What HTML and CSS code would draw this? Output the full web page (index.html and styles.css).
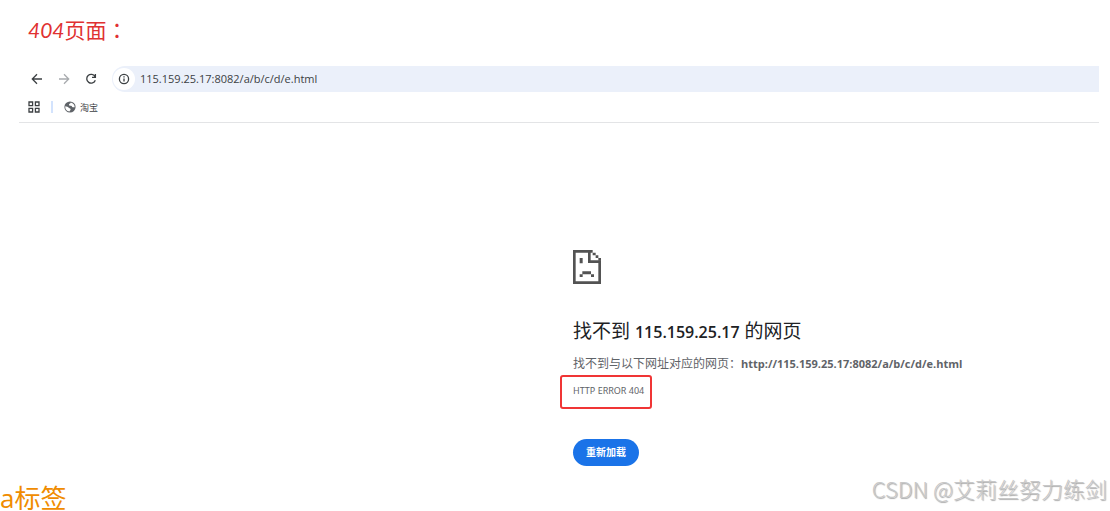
FILE: index.html
```html
<!DOCTYPE html>
<html lang="zh-CN">
<head>
    <meta charset="UTF-8">
    <meta name="viewport" content="width=device-width, initial-scale=1.0">
    <title>404页面</title>
    <link rel="stylesheet" href="styles.css">
</head>
<body>
    <h2 class="note-title" lang="zh-Hant"><i>404</i>页面：</h2>

    <div class="browser">
        <!-- Toolbar -->
        <div class="toolbar">
            <button class="nav-btn" aria-label="后退">
                <svg viewBox="0 0 12 12"><path d="M11 6H1.5M6 1.3L1.3 6L6 10.7"/></svg>
            </button>
            <button class="nav-btn disabled" aria-label="前进" disabled>
                <svg viewBox="0 0 12 12"><path d="M1 6H10.5M6 1.3L10.7 6L6 10.7"/></svg>
            </button>
            <button class="nav-btn" aria-label="刷新">
                <svg viewBox="0 0 12 12"><path d="M10 3.6A4.4 4.4 0 1 0 10.3 7.2M10.4 1V4.4H7"/></svg>
            </button>
            <div class="address-bar">
                <span class="site-info">
                    <svg viewBox="0 0 12 12"><circle cx="6" cy="6" r="4.6"/><path d="M6 5.4V8.6M6 3.3V4.5"/></svg>
                </span>
                <input class="address" type="text" aria-label="地址" value="115.159.25.17:8082/a/b/c/d/e.html">
            </div>
        </div>

        <!-- Bookmarks -->
        <div class="bookmarks">
            <button class="apps-btn" aria-label="应用">
                <svg viewBox="0 0 12 12"><path d="M1 1h3.6v3.6H1zM7.4 1H11v3.6H7.4zM1 7.4h3.6V11H1zM7.4 7.4H11V11H7.4z"/></svg>
            </button>
            <span class="divider"></span>
            <a class="bookmark" href="#">
                <svg viewBox="0 0 12 12">
                    <circle cx="6" cy="6" r="5.6" fill="#5f6368"/>
                    <path d="M6.8 1.4C6.6 2.6 5.2 2.3 5 3.4C4.8 4.3 5.8 4.8 7 4.7C8.2 4.7 7.7 6.2 8.8 6.3L10.7 6.2C10.8 4 9.2 1.9 6.8 1.4ZM1.3 5.3C1 7.9 2.7 10.3 5.6 10.6C5.4 9.4 6.8 9.3 6.6 8.2C6.3 7.1 4.9 7.5 4.5 6.6C4.1 5.8 2.6 5.4 1.3 5.3Z" fill="#fff"/>
                </svg>
                <span>淘宝</span>
            </a>
        </div>

        <!-- Error page -->
        <div class="error-page">
            <svg class="error-icon" viewBox="0 0 84 102">
                <path d="M0 0H59V8H53V31H84V102H0ZM8 8V94H76V39H45V8Z" fill-rule="evenodd"/>
                <path d="M59 8H68V16H59ZM68 16H76V24H68ZM76 24H84V32H76ZM20 24H29V40H20ZM28 64H54V73H28ZM20 73H29V81H20ZM54 73H63V81H54Z"/>
            </svg>
            <h1>找不到 <b>115.159.25.17</b> 的网页</h1>
            <p class="message">找不到与以下网址对应的网页：<strong>http://115.159.25.17:8082/a/b/c/d/e.html</strong></p>
            <div class="error-code">HTTP ERROR 404</div>
            <button class="reload-btn">重新加载</button>
        </div>
    </div>

    <h2 class="next-title">a标签</h2>
    <div class="watermark">CSDN @艾莉丝努力练剑</div>
</body>
</html>
```

FILE: styles.css
```css
/* Global Styles */
* {
    box-sizing: border-box;
}

body {
    font-family: "Open Sans", "Noto Sans CJK SC", sans-serif;
    background: #fff;
    margin: 0;
    min-height: 100vh;
    display: flex;
    flex-direction: column;
    position: relative;
}

h1, h2, p {
    margin: 0;
    font-weight: normal;
}

button {
    font-family: inherit;
    border: none;
    padding: 0;
    background: none;
    cursor: pointer;
}

svg {
    display: block;
    width: 12px;
    height: 12px;
}

.note-title {
    margin: 14px 28px 21px;
    font-family: "Noto Sans CJK TC", sans-serif;
    font-size: 21px;
    line-height: 30px;
    color: #e03131;
}

.note-title i {
    font-family: Lato, sans-serif;
}

.browser {
    margin: 0 11px 0 19px;
}

/* Toolbar */
.toolbar {
    display: flex;
    align-items: center;
    gap: 15px;
    padding-left: 12px;
}

.nav-btn svg,
.site-info svg,
.apps-btn svg {
    fill: none;
    stroke: #3c4043;
    stroke-width: 1.3;
}

.nav-btn.disabled svg {
    stroke: #a8abae;
}

.address-bar {
    flex: 1;
    display: flex;
    align-items: center;
    gap: 5px;
    height: 26px;
    padding-left: 1px;
    border-radius: 13px 0 0 13px;
    background: #ebf0fa;
}

.site-info {
    display: flex;
    align-items: center;
    justify-content: center;
    width: 22px;
    height: 22px;
    border-radius: 50%;
    background: #fff;
}

.address {
    flex: 1;
    border: none;
    outline: none;
    padding: 0 0 2px;
    background: none;
    font-family: inherit;
    font-size: 11px;
    color: #3c4043;
}

/* Bookmarks */
.bookmarks {
    display: flex;
    align-items: center;
    gap: 11px;
    height: 31px;
    padding-left: 9px;
    border-bottom: 1px solid #e3e4e6;
}

.divider {
    width: 2px;
    height: 12px;
    background: #d3e3fd;
}

.bookmark {
    display: flex;
    align-items: center;
    gap: 4px;
    font-size: 9px;
    color: #3c4043;
    text-decoration: none;
}

/* Error page */
.error-page {
    display: flex;
    flex-direction: column;
    align-items: flex-start;
    margin-left: 50%;
    padding: 127px 0 0 14px;
    color: #5f6368;
}

.error-icon {
    width: 28px;
    height: 34px;
    fill: #535353;
}

h1 {
    margin-top: 32px;
    font-size: 19px;
    line-height: 30px;
    color: #202124;
}

h1 b {
    font-size: 16px;
    font-weight: 600;
}

.message {
    margin-top: 7px;
    font-size: 12px;
    line-height: 20px;
}

.message strong {
    font-size: 11px;
}

.error-code {
    margin: 1px 0 0 -13px;
    padding: 5px 6px 7px 11px;
    border: 2px solid #f03535;
    border-radius: 3px;
    font-family: "Noto Sans", sans-serif;
    font-size: 9px;
    line-height: 18px;
}

.reload-btn {
    margin-top: 30px;
    padding: 0 13px;
    border-radius: 14px;
    background: #1a73e8;
    color: #fff;
    font-size: 10px;
    font-weight: bold;
    line-height: 27px;
}

.next-title {
    margin-top: 19px;
    font-size: 26px;
    line-height: 26px;
    color: #f08c00;
}

.watermark {
    position: absolute;
    right: 3px;
    bottom: 7px;
    font-family: "Noto Sans CJK SC", sans-serif;
    font-size: 22px;
    font-weight: 300;
    line-height: 32px;
    color: #c8c8c8;
    text-shadow: 1px 1px 1px #aaa;
}
```
